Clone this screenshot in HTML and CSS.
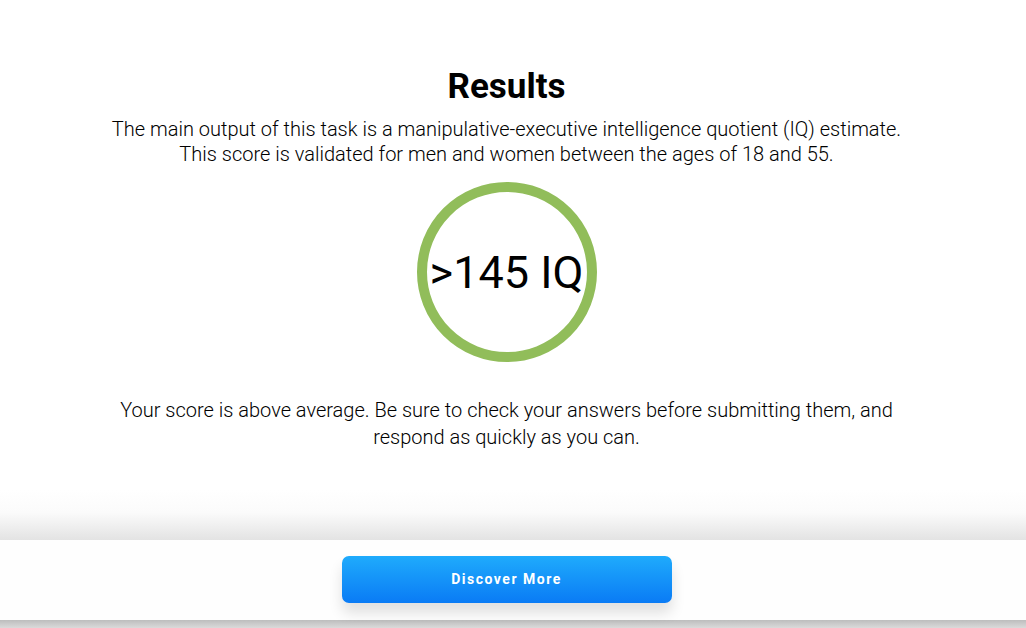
FILE: index.html
```html
<!DOCTYPE html>
<html lang="en">
<head>
    <meta charset="UTF-8">
    <meta name="viewport" content="width=device-width, initial-scale=1.0">
    <title>Results</title>
    <link rel="stylesheet" href="styles.css">
</head>
<body>

    <div class="results">
        <h1>Results</h1>
        <p class="intro">
            The main output of this task is a manipulative-executive intelligence quotient (IQ) estimate.<br>
            This score is validated for men and women between the ages of 18 and 55.
        </p>

        <div class="score-ring">
            <span class="score">&gt;145 IQ</span>
        </div>

        <p class="feedback">
            Your score is above average. Be sure to check your answers before submitting them, and<br>
            respond as quickly as you can.
        </p>
    </div>

    <div class="fade"></div>

    <div class="footer">
        <button class="discover">Discover More</button>
    </div>
    <div class="bottom-strip"></div>

</body>
</html>
```

FILE: styles.css
```css
body {
    margin: 0;
    background-color: #ffffff;
    font-family: Roboto, "Liberation Sans", Arial, sans-serif;
    color: #000;
    text-align: center;
}
.results {
    height: 490px;
    padding: 66px 13px 0 0;
    box-sizing: border-box;
}
h1 {
    margin: 0;
    font-size: 35px;
    font-weight: 700;
    line-height: 42px;
    color: #000;
}
.intro, .feedback {
    margin: 0;
    font-size: 20px;
    font-weight: 300;
    line-height: 25px;
    color: #000;
}
.intro {
    margin-top: 9px;
}
.score-ring {
    width: 160px;
    height: 160px;
    margin: 15px auto 0;
    border: 10px solid #91bd5a;
    border-radius: 50%;
    display: flex;
    align-items: center;
    justify-content: center;
}
.score {
    font-size: 45px;
    font-weight: 400;
    color: #000;
    white-space: nowrap;
}
.feedback {
    margin-top: 35px;
    line-height: 27px;
}
.fade {
    height: 50px;
    background: linear-gradient(to bottom, #ffffff 0%, #fbfbfb 45%, #e3e3e3 100%);
}
.footer {
    height: 80px;
    padding-right: 13px;
    background: #fefefe;
    display: flex;
    align-items: center;
    justify-content: center;
}
.discover {
    width: 330px;
    height: 47px;
    margin-top: -2px;
    border: none;
    border-radius: 7px;
    background: linear-gradient(to bottom, #1fabfc, #0a7bf5);
    color: #ffffff;
    font-family: Roboto, "Liberation Sans", Arial, sans-serif;
    font-size: 14px;
    font-weight: 700;
    letter-spacing: 1.5px;
    box-shadow: 0 10px 14px rgba(0, 0, 0, 0.12);
    cursor: pointer;
}
.bottom-strip {
    height: 8px;
    background: linear-gradient(to bottom, #bdbdbd, #dadada);
}
```
